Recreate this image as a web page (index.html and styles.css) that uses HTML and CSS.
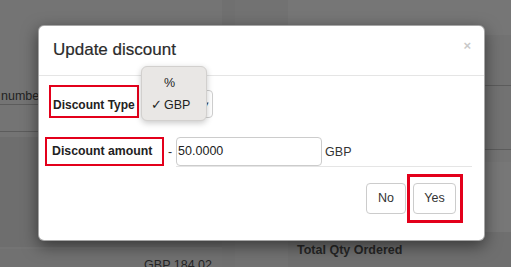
FILE: index.html
```html
<!DOCTYPE html>
<html>
<head>
<meta charset="utf-8">
<link rel="stylesheet" href="styles.css">
</head>
<body>
<div class="bg">
  <div class="bg-left">
    <div class="bg-row bg-row-a">number</div>
    <div class="bg-row bg-row-b"></div>
    <div class="bg-band"></div>
    <div class="bg-total">GBP 184.02</div>
  </div>
  <div class="bg-mid"></div>
  <div class="bg-right">
    <div class="bg-r-top"></div>
    <div class="bg-r-row1"></div>
    <div class="bg-r-row2"></div>
    <div class="bg-r-light"></div>
    <div class="bg-r-title">Total Qty Ordered</div>
  </div>
</div>

<div class="overlay">
  <div class="modal">
    <div class="modal-header">
      <div class="modal-title">Update discount</div>
      <div class="close">×</div>
    </div>
    <div class="modal-body">
      <div class="row row-type">
        <div class="label mark label-type">Discount Type</div>
        <div class="select"><span class="caret">▾</span></div>
      </div>
      <div class="row row-amount">
        <div class="label mark label-amount">Discount amount</div>
        <span class="minus">-</span>
        <div class="input">50.0000</div>
        <span class="unit">GBP</span>
      </div>
      <div class="rule"></div>
    </div>
    <div class="modal-footer">
      <div class="btn">No</div>
      <div class="yes-mark"><div class="btn btn-yes">Yes</div></div>
    </div>
    <div class="popup">
      <div class="opt"><span class="chk"></span>%</div>
      <div class="opt"><span class="chk">✓</span>GBP</div>
    </div>
  </div>
</div>
</body>
</html>
```

FILE: styles.css
```css
html, body {
  margin: 0;
  padding: 0;
}
body {
  width: 511px;
  height: 267px;
  overflow: hidden;
  position: relative;
  background: #747474;
  font-family: "Liberation Sans", Arial, Helvetica, sans-serif;
  color: #333;
}

/* dimmed page behind the modal */
.bg {
  display: grid;
  grid-template-columns: 222px 66px 1fr;
  height: 267px;
}
.bg-left {
  display: flex;
  flex-direction: column;
  padding-top: 88px;
}
.bg-row {
  border-bottom: 1px solid #5c5c5c;
  font-size: 12.5px;
  color: #222;
  padding-left: 1px;
}
.bg-row-a { height: 16px; line-height: 16px; }
.bg-row-b { height: 26px; }
.bg-band {
  margin-top: 5px;
  height: 110px;
  background: #6e6e6e;
}
.bg-total {
  margin-top: auto;
  height: 18px;
  background: #717171;
  text-align: right;
  padding-right: 10px;
  font-size: 12.5px;
  line-height: 33px;
  color: #252525;
  overflow: hidden;
}
.bg-mid {
  border-left: 13px solid #707070;
  background: #727272;
}
.bg-right {
  display: flex;
  flex-direction: column;
}
.bg-r-top { height: 35px; background: #767676; }
.bg-r-row1 { height: 50px; border-bottom: 1px solid #5c5c5c; background: #727272; }
.bg-r-row2 { height: 63px; border-bottom: 1px solid #5c5c5c; background: #727272; }
.bg-r-light { margin-top: 12px; height: 70px; background: #777777; }
.bg-r-title {
  flex: 1;
  background: #6f6f6f;
  padding-left: 9px;
  padding-top: 4px;
  font-size: 12.5px;
  font-weight: bold;
  color: #262626;
  line-height: 28px;
}

/* modal */
.overlay {
  position: absolute;
  inset: 0;
}
.modal {
  position: relative;
  margin: 25px 0 0 38px;
  width: 447px;
  box-sizing: border-box;
  background: #fff;
  border: 1px solid rgba(0,0,0,.35);
  border-radius: 6px;
  box-shadow: 0 5px 16px rgba(0,0,0,.5);
}
.modal-header {
  display: flex;
  justify-content: space-between;
  padding: 13px 13px 15px 14px;
  border-bottom: 1px solid #e5e5e5;
}
.modal-title {
  font-size: 17px;
  line-height: 21px;
  color: #2b2b2b;
  -webkit-text-stroke: 0.2px #2b2b2b;
}
.close {
  font-size: 13px;
  font-weight: bold;
  line-height: 13px;
  color: #c9c9c9;
}
.modal-body {
  padding-top: 9px;
}
.row {
  display: flex;
  align-items: center;
}
.label {
  box-sizing: border-box;
  font-size: 12.3px;
  font-weight: bold;
  color: #222;
  white-space: nowrap;
}
.mark {
  border: 2px solid #e3001b;
}
.label-type {
  margin-left: 10px;
  width: 90px;
  padding: 7px 2px 0 2px;
  font-size: 12px;
  line-height: 22px;
  height: 33px;
}
.select {
  margin-left: 4px;
  margin-top: 5px;
  width: 70px;
  height: 28px;
  box-sizing: border-box;
  border: 1px solid #cfcfcf;
  border-radius: 4px;
  display: flex;
  justify-content: flex-end;
  align-items: center;
  padding-right: 3px;
}
.caret {
  font-size: 9px;
  color: #444;
}
.row-amount {
  margin-top: 19px;
}
.label-amount {
  margin-left: 6px;
  width: 119px;
  padding: 0 2px 0 5px;
  line-height: 25px;
  height: 29px;
}
.minus {
  margin-left: 4px;
  font-size: 12.3px;
  color: #333;
}
.input {
  margin-left: 4px;
  width: 146px;
  height: 29px;
  box-sizing: border-box;
  border: 1px solid #cccccc;
  border-radius: 4px;
  padding-left: 1px;
  font-size: 12.5px;
  line-height: 27px;
  color: #222;
}
.unit {
  margin-left: 3px;
  font-size: 12.5px;
  color: #333;
}
.rule {
  margin: 0 12px 0 137px;
  border-top: 1px solid #e5e5e5;
}
.modal-footer {
  display: flex;
  justify-content: flex-end;
  align-items: center;
  padding: 7px 21px 17px 0;
}
.btn {
  box-sizing: border-box;
  height: 31px;
  border: 1px solid #cccccc;
  border-radius: 4px;
  background: #fff;
  font-size: 12.5px;
  line-height: 29px;
  color: #333;
  text-align: center;
  width: 40px;
}
.btn-yes {
  width: 43px;
}
.yes-mark {
  margin-left: 1px;
  border: 3px solid #e3001b;
  padding: 6px 4px 6px 3px;
}

/* open select dropdown */
.popup {
  position: absolute;
  left: 102px;
  top: 40px;
  width: 66px;
  height: 55px;
  box-sizing: border-box;
  padding: 5px 0 4px 9px;
  background: #e9e7e5;
  border: 1px solid #d2d0ce;
  border-radius: 6px;
  box-shadow: 0 2px 6px rgba(0,0,0,.22);
}
.opt {
  font-size: 12.5px;
  line-height: 22px;
  color: #1e1e1e;
  white-space: nowrap;
}
.chk {
  display: inline-block;
  width: 13px;
  font-family: "DejaVu Sans", sans-serif;
  font-size: 13px;
  font-weight: bold;
}
```
